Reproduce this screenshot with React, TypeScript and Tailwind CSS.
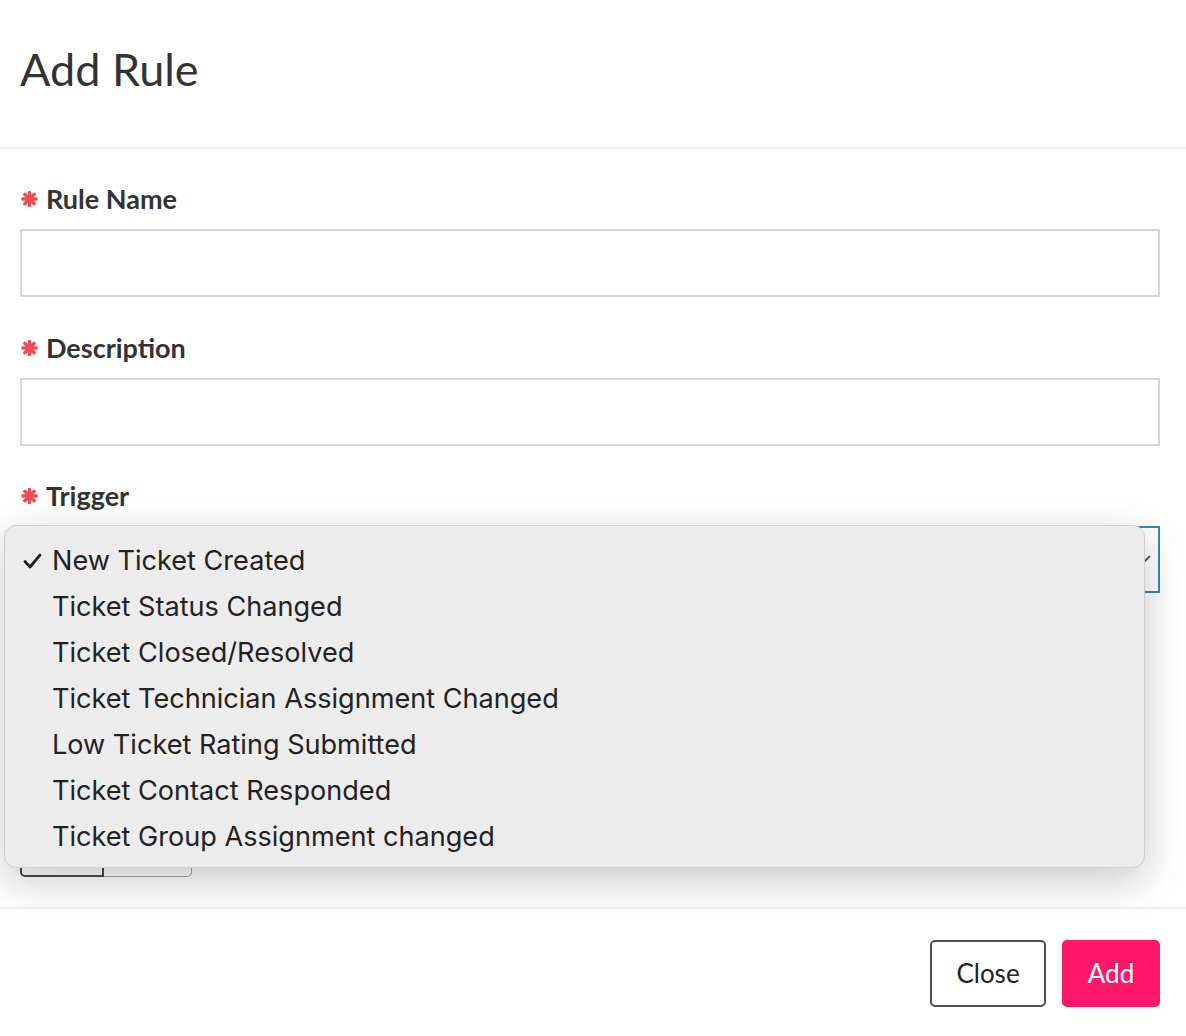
import React from "react";

const Asterisk = () => (
  <svg width="17" height="16" viewBox="0 0 17 16" className="shrink-0">
    <g stroke="#ef4b55" strokeWidth="3.4" strokeLinecap="round">
      <line x1="8.5" y1="1.6" x2="8.5" y2="14.4" />
      <line x1="1.8" y1="8" x2="15.2" y2="8" />
      <line x1="3.8" y1="3.3" x2="13.2" y2="12.7" />
      <line x1="13.2" y1="3.3" x2="3.8" y2="12.7" />
    </g>
  </svg>
);

const Label = ({ text }: { text: string }) => (
  <div className="flex h-8 items-center gap-[8px] pl-[1px]">
    <Asterisk />
    <span className="text-[27px] font-bold leading-8 text-[#333]">{text}</span>
  </div>
);

const items = [
  "New Ticket Created",
  "Ticket Status Changed",
  "Ticket Closed/Resolved",
  "Ticket Technician Assignment Changed",
  "Low Ticket Rating Submitted",
  "Ticket Contact Responded",
  "Ticket Group Assignment changed",
];

export default function App() {
  return (
    <div className="relative min-h-[1036px] w-[1186px] overflow-hidden bg-white font-['Lato',sans-serif]">
      <div className="border-b-2 border-[#efefef] px-5 pb-[50px] pt-[41px]">
        <h1 className="text-[45px] font-normal leading-[56px] text-[#333]">Add Rule</h1>
      </div>

      <div className="border-b-2 border-[#efefef] pb-[30px] pl-5 pr-[26px] pt-[34px]">
        <Label text="Rule Name" />
        <div className="mt-[14px] h-[68px] border-2 border-[#d5d5da] bg-white" />

        <div className="mt-[35px]">
          <Label text="Description" />
        </div>
        <div className="mt-[14px] h-[68px] border-2 border-[#d5d5da] bg-white" />

        <div className="mt-[34px]">
          <Label text="Trigger" />
        </div>
        <div className="relative mt-[14px] flex h-[67px] items-center justify-end border-2 border-[#3c84b8] bg-white pr-[7px]">
          <svg width="16" height="10" viewBox="0 0 16 10">
            <path d="M1.5 1.5 L8 8 L14.5 1.5" fill="none" stroke="#555" strokeWidth="1.8" strokeLinecap="round" />
          </svg>
        </div>

        <div className="mt-[234px] flex h-[50px] w-[172px]">
          <div className="w-[84px] rounded-l-[5px] border-2 border-[#4a4a4a]" />
          <div className="flex-1 rounded-r-[5px] border-[1.5px] border-l-0 border-[#a8a8a8]" />
        </div>
      </div>

      <div className="flex justify-end gap-4 pr-[26px] pt-[31px]">
        <button className="h-[67px] w-[116px] rounded-[5px] border-2 border-[#4f4f4f] bg-white text-[26px] text-[#222]">
          Close
        </button>
        <button className="h-[67px] w-[98px] rounded-[5px] bg-[#ff1767] text-[26px] text-white">
          Add
        </button>
      </div>

      <div className="absolute left-[4px] top-[525px] h-[343px] w-[1141px] rounded-[12px] border border-[#cfcfcf] bg-[#ececec] pt-[12px] shadow-[0_12px_40px_rgba(0,0,0,0.22)] font-['Inter',sans-serif]">
        {items.map((t, i) => (
          <div key={t} className="relative flex h-[46px] items-center pl-[47px] text-[27.1px] leading-none text-[#222]">
            {i === 0 && (
              <svg className="absolute left-[18px] top-[15px]" width="19" height="16" viewBox="0 0 19 16">
                <path d="M2 8.5 L7 14 L17 2" fill="none" stroke="#222" strokeWidth="2.8" strokeLinecap="round" strokeLinejoin="round" />
              </svg>
            )}
            {t}
          </div>
        ))}
      </div>
    </div>
  );
}
